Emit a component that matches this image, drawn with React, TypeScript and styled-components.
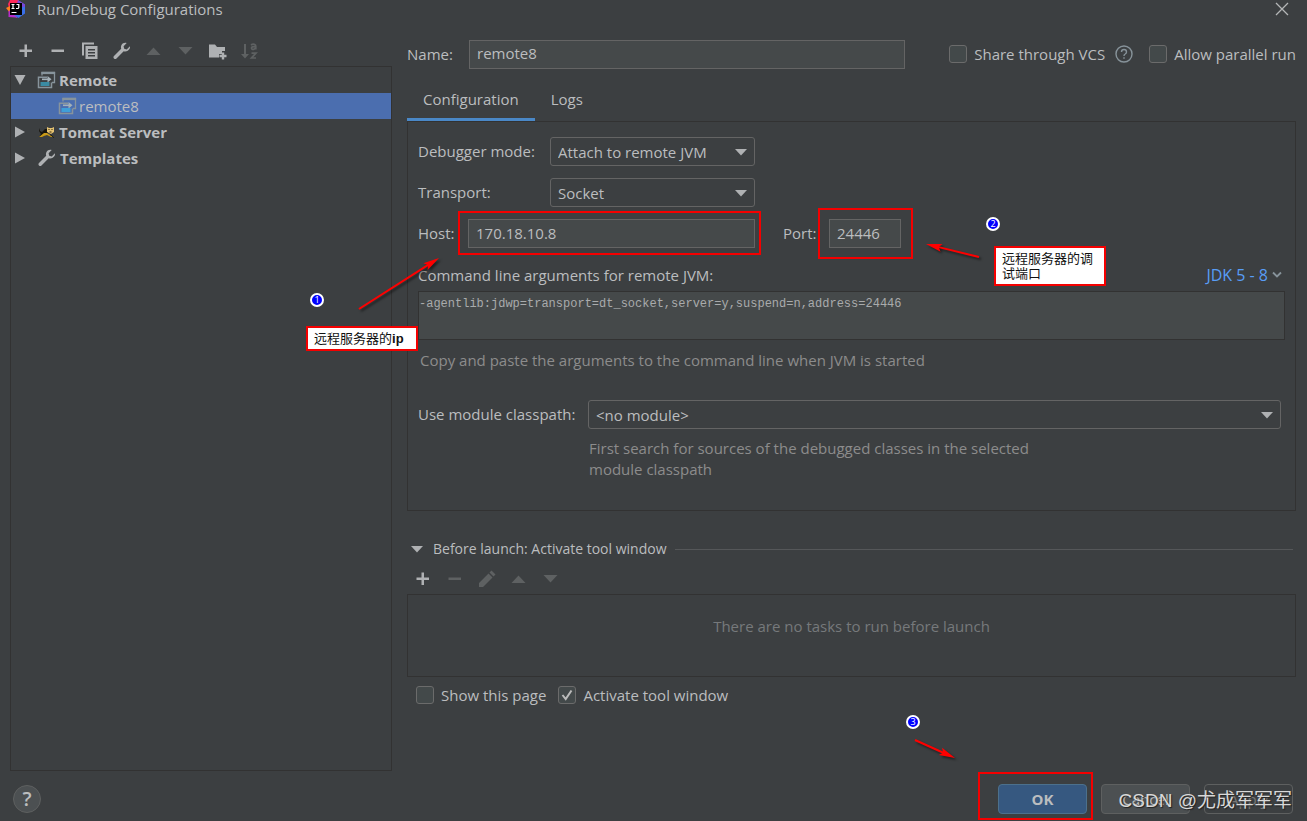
import React from "react";
import styled, { createGlobalStyle, css } from "styled-components";

const GlobalStyle = createGlobalStyle`
  *, *::before, *::after { box-sizing: border-box; }
  body {
    margin: 0;
    background: #3c3f41;
    color: #bbbdbf;
    font-family: "Open Sans", "Noto Sans", "Noto Sans CJK SC", sans-serif;
    font-size: 15px;
    line-height: 20px;
  }
  button, input, select, textarea { font: inherit; color: inherit; margin: 0; }
`;

const Dialog = styled.div`
  display: flex;
  flex-direction: column;
  min-height: 100vh;
  overflow: hidden;
`;

const TitleBar = styled.header`
  display: flex;
  align-items: center;
  height: 36px;
  padding: 0 18px 18px 6px;
`;

const Title = styled.h1`
  flex: 1;
  margin: 0 0 0 11px;
  font-size: 15px;
  font-weight: 400;
`;

const PlainButton = styled.button`
  display: flex;
  padding: 0;
  border: 0;
  background: none;
`;

const Body = styled.div`
  flex: 1;
  display: flex;
  gap: 15px;
  padding: 0 11px 0 10px;
`;

const Sidebar = styled.aside`
  flex: 0 0 382px;
  display: flex;
  flex-direction: column;
`;

const Toolbar = styled.div`
  display: flex;
  align-items: center;
  gap: 12px;
  height: 30px;
  padding: 0 6px;
`;

const TaskToolbar = styled(Toolbar)`
  margin-top: 5px;
`;

const Tree = styled.ul`
  flex: 1;
  margin: 0;
  padding: 0;
  list-style: none;
  border: 1px solid #323232;
`;

const TreeItem = styled.li<{ $child?: boolean }>`
  display: flex;
  align-items: center;
  gap: ${(p) => (p.$child ? 2 : 3)}px;
  height: 26px;
  padding-left: ${(p) => (p.$child ? 47 : 3)}px;
  font-weight: ${(p) => (p.$child ? 400 : 700)};
  background: ${(p) => (p.$child ? "#4b6eaf" : "none")};
`;

const Twisty = styled.span`
  display: flex;
  width: 20px;
`;

const Main = styled.main`
  flex: 1;
  min-width: 0;
  display: flex;
  flex-direction: column;
`;

const NameRow = styled.div`
  display: flex;
  align-items: center;
  height: 36px;
`;

const NameLabel = styled.label`
  flex: 0 0 62px;
`;

const TextInput = styled.input`
  display: block;
  width: 100%;
  min-width: 0;
  height: 29px;
  padding: 0 7px 2px;
  border: 1px solid #646464;
  border-radius: 0;
  background: #45494a;
`;

const NameField = styled.div`
  flex: 1;
  margin-right: 44px;
`;

const CheckLabel = styled.label`
  display: flex;
  align-items: center;
  gap: 7px;
  white-space: nowrap;
`;

const CheckWrap = styled.span`
  position: relative;
  display: flex;
  svg { position: absolute; left: 0; top: 0; pointer-events: none; }
`;

const CheckBox = styled.input`
  appearance: none;
  width: 18px;
  height: 18px;
  border: 1px solid #6b6b6b;
  border-radius: 3px;
  background: #43494a;
`;

const HelpMark = styled(PlainButton)`
  margin: 0 16px 0 10px;
`;

const Tabs = styled.div`
  display: flex;
  height: 49px;
  padding-top: 12px;
`;

const Tab = styled.button<{ $active?: boolean }>`
  padding: 0 16px 4px;
  border: 0;
  background: none;
  border-bottom: 3px solid ${(p) => (p.$active ? "#4a88c7" : "transparent")};
`;

const Panel = styled.section`
  position: relative;
  display: flex;
  flex-direction: column;
  border: 1px solid #323232;
  padding: 15px 10px 30px;
`;

const FieldRow = styled.div`
  display: flex;
  align-items: center;
  height: 29px;
  margin-bottom: 12px;
`;

const FieldLabel = styled.label<{ $width: number }>`
  flex: 0 0 ${(p) => p.$width}px;
  padding-bottom: 2px;
  white-space: nowrap;
`;

const SelectWrap = styled.span<{ $width?: number }>`
  position: relative;
  display: flex;
  ${(p) => (p.$width ? css`width: ${p.$width}px;` : css`flex: 1;`)}
  svg { position: absolute; right: 8px; top: 12px; pointer-events: none; }
`;

const Select = styled.select`
  appearance: none;
  width: 100%;
  height: 29px;
  padding: 0 24px 0 7px;
  border: 1px solid #646464;
  border-radius: 3px;
  background: #3c3f41;
`;

const Marked = styled.div<{ $width: number }>`
  position: relative;
  width: ${(p) => p.$width}px;
`;

const RedFrame = styled.span<{ $t: number; $b: number; $l: number; $r: number }>`
  position: absolute;
  top: -${(p) => p.$t}px;
  bottom: -${(p) => p.$b}px;
  left: -${(p) => p.$l}px;
  right: -${(p) => p.$r}px;
  border: 2px solid #f40000;
  pointer-events: none;
`;

const PortLabel = styled.label`
  width: 46px;
  margin-left: 28px;
  padding-bottom: 2px;
`;

const ArgsHead = styled.div`
  display: flex;
  justify-content: space-between;
  padding: 5px 3px 6px 0;
`;

const JdkLink = styled.a`
  display: flex;
  align-items: center;
  gap: 4px;
  color: #589df6;
  font-size: 16px;
  text-decoration: none;
`;

const Args = styled.textarea`
  height: 49px;
  padding: 2px 0;
  border: 1px solid #323232;
  border-radius: 0;
  background: #45494a;
  font-family: "Liberation Mono", monospace;
  font-size: 12px;
  resize: none;
  color: #a9abac;
`;

const Hint = styled.p<{ $left: number }>`
  width: 460px;
  margin: 0 0 0 ${(p) => p.$left}px;
  color: #8c8c8c;
  line-height: 21px;
`;

const ArgsHint = styled(Hint)`
  width: auto;
  padding: 10px 0 29px;
`;

const ModuleRow = styled(FieldRow)`
  margin: 0 4px 9px 0;
`;

const SectionHead = styled.button`
  display: flex;
  align-items: center;
  gap: 10px;
  margin-top: 28px;
  padding: 0 3px 0 4px;
  border: 0;
  background: none;
  height: 20px;
  font-size: 14px;
  &::after { content: ""; flex: 1; height: 1px; background: #555759; margin-left: -2px; }
`;

const Tasks = styled.div`
  display: flex;
  justify-content: center;
  height: 83px;
  margin-bottom: 8px;
  padding-top: 21px;
  border: 1px solid #323232;
  color: #76797b;
`;

const CheckRow = styled.div`
  display: flex;
  gap: 12px;
  padding-left: 9px;
`;

const Footer = styled.footer`
  display: flex;
  align-items: center;
  gap: 14px;
  height: 50px;
  padding: 6px 14px 0 13px;
`;

const HelpButton = styled.button`
  width: 28px;
  height: 28px;
  margin-right: auto;
  padding: 0;
  border: 1px solid #5e6060;
  border-radius: 50%;
  background: #4c5052;
  font-size: 20px;
  font-weight: 600;
`;

const Button = styled.button<{ $kind?: "primary" | "disabled" }>`
  width: 89px;
  height: 30px;
  padding: 0;
  border: 1px solid #5e6060;
  border-radius: 4px;
  background: #4c5052;
  ${(p) => p.$kind === "primary" && css`
    border-color: #4c708c;
    background: #365880;
    font-weight: 700;
  `}
  ${(p) => p.$kind === "disabled" && css`
    background: #3c3f41;
    color: #777777;
  `}
`;

const FooterActions = styled.div`
  position: relative;
  display: flex;
  gap: 14px;
`;

const Watermark = styled.span`
  position: absolute;
  right: 1px;
  top: 4px;
  font-family: "Liberation Sans", "Noto Sans CJK SC", sans-serif;
  font-size: 19px;
  line-height: 26px;
  white-space: nowrap;
  color: #d8d8d8;
  text-shadow: 1px 1px 1px #222222;
  pointer-events: none;
`;

const Note = styled.div<{ $x: number; $y: number }>`
  position: absolute;
  left: ${(p) => p.$x}px;
  top: ${(p) => p.$y}px;
  width: 112px;
  padding: 3px 6px;
  border: 2px solid #f40000;
  background: #ffffff;
  color: #111111;
  font-family: "Liberation Sans", "Noto Sans CJK SC", sans-serif;
  font-size: 13px;
  line-height: 15px;
`;

const Badge = styled.span<{ $x: number; $y: number }>`
  position: absolute;
  left: ${(p) => p.$x}px;
  top: ${(p) => p.$y}px;
  width: 14px;
  height: 14px;
  border: 2px solid #ffffff;
  border-radius: 50%;
  background: #0000ff;
  color: #ffffff;
  font-size: 9px;
  line-height: 10px;
  text-align: center;
`;

const ArrowSvg = styled.svg<{ $x: number; $y: number }>`
  position: absolute;
  left: ${(p) => p.$x}px;
  top: ${(p) => p.$y}px;
  filter: drop-shadow(2px 2px 1px rgba(0, 0, 0, 0.5));
  pointer-events: none;
`;

const BottomArea = styled.div`
  position: relative;
`;

const Arrow = ({ x, y, dx, dy }: { x: number; y: number; dx: number; dy: number }) => {
  const w = Math.abs(dx) + 12;
  const h = Math.abs(dy) + 12;
  const x1 = dx > 0 ? 6 : w - 6;
  const y1 = dy > 0 ? 6 : h - 6;
  const angle = (Math.atan2(dy, dx) * 180) / Math.PI;
  const len = Math.hypot(dx, dy);
  return (
    <ArrowSvg $x={x} $y={y} width={w} height={h} aria-hidden="true">
      <g transform={`translate(${x1} ${y1}) rotate(${angle})`} fill="#ff0000">
        <path d={`M0 0H${len - 11}`} stroke="#ff0000" strokeWidth="2" />
        <path d={`M${len} 0L${len - 16} -4L${len - 13} 0L${len - 16} 4Z`} />
      </g>
    </ArrowSvg>
  );
};

const LIT = "#afb1b3";
const DIM = "#5e6162";

const Icon = ({ children, color = LIT }: { children: React.ReactNode; color?: string }) => (
  <svg width="20" height="20" viewBox="0 0 20 20" fill={color} aria-hidden="true">{children}</svg>
);

const Tool = ({ label, children, off }: { label: string; children: React.ReactNode; off?: boolean }) => (
  <PlainButton type="button" aria-label={label} disabled={off}>
    <Icon color={off ? DIM : LIT}>{children}</Icon>
  </PlainButton>
);

const plus = <path d="M8.500 3.500h2.500v5h5v2.500h-5v5H8.500v-5h-5V8.500h5z" />;
const minus = <path d="M3.500 8.500h12.500V11H3.500z" />;
const up = <path d="M9.500 6.500L16.500 14h-14z" />;
const down = <path d="M2.500 6h14L9.500 13.500z" />;
const wrench = (
  <path d="M17.900 5.200l-3.200 3.200-2.500-.6-.6-2.500 3.100-3.200c-2-.7-4.200.1-5.200 1.900-.7 1.300-.7 2.600-.3 3.700L2 14.900c-.7.7-.7 1.800 0 2.500s1.800.7 2.500 0l7.200-7.200c1.300.5 2.800.3 4-.5 1.800-1.100 2.700-2.900 2.200-4.500z" />
);

const RemoteIcon = ({ selected }: { selected?: boolean }) => (
  <svg width="19" height="18" viewBox="0 0 19 18" aria-hidden="true">
    <path d="M5 4.500V1.500h12.500v10H15" fill="none" stroke="#87949c" strokeWidth="1.300" />
    <path d="M4.400 2h13.700" stroke="#87949c" strokeWidth="2.200" />
    <path d="M10 6.200H1.500v10.300h13V11.500" fill="none" stroke="#87949c" strokeWidth="1.500" />
    <path d="M5 8.300h7" fill="none" stroke="#a4b1b8" strokeWidth="1.600" />
    <path d="M10.500 5L14.500 8.300L10.500 11.500z" fill="#a4b1b8" />
    <path d="M3.500 11h9v4h-9z" fill={selected ? "#3f9fd8" : "#3a8ba3"} />
  </svg>
);

const TomcatIcon = () => (
  <svg width="19" height="18" viewBox="0 0 19 18" aria-hidden="true">
    <path d="M2 5l1 3 2 1 3-3 3 0 0 4-4 3-5 1 2-3-2-3z" fill="#17150e" />
    <path d="M2 14l5-4 3 0 3 2 4 2-3 0-4-2-3 1-2 1z" fill="#c99a17" />
    <path d="M10 4l2 1h3l2-1v5l-3 2-4-2z" fill="#e4c272" />
    <path d="M11.500 6.500h1M14.500 6.500h1M12.500 9h2" stroke="#3b2b08" strokeWidth="1.100" />
    <path d="M13 11.500l4 3" stroke="#17150e" strokeWidth="1" />
  </svg>
);

const Logo = () => (
  <svg width="20" height="20" viewBox="0 0 20 20" aria-hidden="true">
    <path d="M2 5L4.500 0h7L15 4l-4 8-7 2z" fill="#fe2857" />
    <path d="M0 9l4-2 3 4-3 3z" fill="#fc801d" />
    <path d="M2.500 12l5-2 4 9-2-.5-7-.5z" fill="#b72cc9" />
    <path d="M13 2l6 3.500v9L12.500 19l-4-2.500L14 9z" fill="#3a6fe8" />
    <path d="M12 1l7 4.500v2l-4 1-4-4z" fill="#7b45d6" />
    <rect x="4" y="4" width="12" height="12" fill="#000" />
    <path d="M5.500 5.500h3M7 5.500v4M5.500 9.500h3M10.500 5.500h2.300v3q0 1-1.300 1H10M5.500 13.500h5" fill="none" stroke="#fff" strokeWidth="1.200" />
  </svg>
);

const Caret = () => (
  <svg width="12" height="7" viewBox="0 0 12 7" aria-hidden="true"><path d="M0 0h12L6 6.500z" fill={LIT} /></svg>
);

const DownTwisty = () => (
  <svg width="12" height="12" viewBox="0 0 12 12" aria-hidden="true"><path d="M0.500 1h11L6 11z" fill={LIT} /></svg>
);

const RightTwisty = () => (
  <svg width="12" height="12" viewBox="0 0 12 12" aria-hidden="true"><path d="M1 0.500L11 6L1 11.500z" fill={LIT} /></svg>
);

const Check = ({ id, label, checked }: { id: string; label: string; checked?: boolean }) => (
  <CheckLabel htmlFor={id}>
    <CheckWrap>
      <CheckBox id={id} type="checkbox" defaultChecked={checked} />
      {checked && (
        <svg width="18" height="18" viewBox="0 0 18 18" aria-hidden="true">
          <path d="M4.500 9l3.200 4L13.500 4.500" fill="none" stroke="#bbbbbb" strokeWidth="2" />
        </svg>
      )}
    </CheckWrap>
    {label}
  </CheckLabel>
);

export default function App() {
  return (
    <>
      <GlobalStyle />
      <Dialog>
        <TitleBar>
          <Logo />
          <Title>Run/Debug Configurations</Title>
          <PlainButton type="button" aria-label="Close">
            <svg width="14" height="14" viewBox="0 0 14 14" aria-hidden="true">
              <path d="M1 1l12 12M13 1L1 13" stroke="#b4b6b7" strokeWidth="1.300" />
            </svg>
          </PlainButton>
        </TitleBar>
        <Body>
          <Sidebar>
            <Toolbar>
              <Tool label="Add">{plus}</Tool>
              <Tool label="Remove">{minus}</Tool>
              <Tool label="Copy">
                <path d="M2 1.500h12v2H4v11H2z" />
                <path fillRule="evenodd" d="M5.500 5h12v13h-12zM8 8v1.500h7V8zM8 11v1.500h7V11zM8 14v1.500h7V14z" />
              </Tool>
              <Tool label="Edit templates">{wrench}</Tool>
              <Tool label="Move up" off>{up}</Tool>
              <Tool label="Move down" off>{down}</Tool>
              <Tool label="New folder">
                <path d="M1 3.500h6l2 2.500h8v4h-3v3h-3v3.500H1z" />
                <path d="M13.800 11.500h2.400v2.300h2.300v2.400h-2.300v2.300h-2.400v-2.300h-2.300v-2.400h2.300z" />
              </Tool>
              <Tool label="Sort" off>
                <path d="M4 3h2v10h3l-4 4.500L1 13h3z" />
                <path d="M11 4q2-1.500 3.800-.5 1 .5 1 2v3M15.500 5.800q-4-.4-4 1.300 0 1.600 2.300 1.200 1.700-.5 1.700-2M11.500 12.200h4.500l-4.500 4.800H16" fill="none" stroke={DIM} strokeWidth="1.700" />
              </Tool>
            </Toolbar>
            <Tree>
              <TreeItem>
                <Twisty><DownTwisty /></Twisty>
                <RemoteIcon />Remote
              </TreeItem>
              <TreeItem $child><RemoteIcon selected />remote8</TreeItem>
              <TreeItem>
                <Twisty><RightTwisty /></Twisty>
                <TomcatIcon />Tomcat Server
              </TreeItem>
              <TreeItem>
                <Twisty><RightTwisty /></Twisty>
                <Icon>{wrench}</Icon>Templates
              </TreeItem>
            </Tree>
          </Sidebar>
          <Main>
            <NameRow>
              <NameLabel htmlFor="name">Name:</NameLabel>
              <NameField><TextInput id="name" defaultValue="remote8" /></NameField>
              <Check id="vcs" label="Share through VCS" />
              <HelpMark type="button" aria-label="About sharing">
                <svg width="18" height="18" viewBox="0 0 18 18" fill="none" stroke="#87939a" strokeWidth="1.400" aria-hidden="true">
                  <circle cx="9" cy="9" r="8" />
                  <path d="M6.500 7q0-2.500 2.500-2.500T11.500 7q0 1.200-1.300 2Q9 9.700 9 11M9 12.300v1.500" />
                </svg>
              </HelpMark>
              <Check id="parallel" label="Allow parallel run" />
            </NameRow>
            <Tabs role="tablist">
              <Tab role="tab" aria-selected="true" $active>Configuration</Tab>
              <Tab role="tab" aria-selected="false">Logs</Tab>
            </Tabs>
            <Panel>
              <FieldRow>
                <FieldLabel htmlFor="mode" $width={132}>Debugger mode:</FieldLabel>
                <SelectWrap $width={205}>
                  <Select id="mode"><option>Attach to remote JVM</option></Select>
                  <Caret />
                </SelectWrap>
              </FieldRow>
              <FieldRow>
                <FieldLabel htmlFor="transport" $width={132}>Transport:</FieldLabel>
                <SelectWrap $width={205}>
                  <Select id="transport"><option>Socket</option></Select>
                  <Caret />
                </SelectWrap>
              </FieldRow>
              <FieldRow>
                <FieldLabel htmlFor="host" $width={50}>Host:</FieldLabel>
                <Marked $width={287}>
                  <TextInput id="host" defaultValue="170.18.10.8" />
                  <RedFrame $t={8} $b={7} $l={10} $r={6} />
                </Marked>
                <PortLabel htmlFor="port">Port:</PortLabel>
                <Marked $width={72}>
                  <TextInput id="port" defaultValue="24446" />
                  <RedFrame $t={11} $b={11} $l={11} $r={12} />
                </Marked>
              </FieldRow>
              <ArgsHead>
                <label htmlFor="args">Command line arguments for remote JVM:</label>
                <JdkLink href="#jdk">
                  JDK 5 - 8
                  <svg width="10" height="8" viewBox="0 0 10 8" aria-hidden="true">
                    <path d="M1 1.500l4 4 4-4" fill="none" stroke="#87939a" strokeWidth="1.800" />
                  </svg>
                </JdkLink>
              </ArgsHead>
              <Args id="args" readOnly defaultValue="-agentlib:jdwp=transport=dt_socket,server=y,suspend=n,address=24446" />
              <ArgsHint $left={2}>Copy and paste the arguments to the command line when JVM is started</ArgsHint>
              <ModuleRow>
                <FieldLabel htmlFor="module" $width={170}>Use module classpath:</FieldLabel>
                <SelectWrap>
                  <Select id="module"><option>&lt;no module&gt;</option></Select>
                  <Caret />
                </SelectWrap>
              </ModuleRow>
              <Hint $left={171}>First search for sources of the debugged classes in the selected module classpath</Hint>
              <Badge $x={-98} $y={171}>1</Badge>
              <Note $x={-102} $y={204}>远程服务器的<b>ip</b></Note>
              <Arrow x={-55} y={130} dx={80} dy={-51} />
              <Badge $x={578} $y={95}>2</Badge>
              <Note $x={586} $y={124}>远程服务器的调试端口</Note>
              <Arrow x={512} y={116} dx={-53} dy={-13} />
            </Panel>
            <SectionHead type="button"><Caret />Before launch: Activate tool window</SectionHead>
            <TaskToolbar>
              <Tool label="Add task">{plus}</Tool>
              <Tool label="Remove task" off>{minus}</Tool>
              <Tool label="Edit task" off>
                <path d="M2 14L11.500 4.500l4 4L6 18H2zM12.500 3.500l2-2 4 4-2 2z" />
              </Tool>
              <Tool label="Move task up" off>{up}</Tool>
              <Tool label="Move task down" off>{down}</Tool>
            </TaskToolbar>
            <Tasks>There are no tasks to run before launch</Tasks>
            <BottomArea>
              <CheckRow>
                <Check id="show" label="Show this page" />
                <Check id="activate" label="Activate tool window" checked />
              </CheckRow>
              <Badge $x={499} $y={30}>3</Badge>
              <Arrow x={502} y={49} dx={40} dy={18} />
            </BottomArea>
          </Main>
        </Body>
        <Footer>
          <HelpButton type="button" aria-label="Help">?</HelpButton>
          <FooterActions>
            <Marked $width={89}>
              <Button type="button" $kind="primary">OK</Button>
              <RedFrame $t={12} $b={6} $l={20} $r={6} />
            </Marked>
            <Button type="button">Cancel</Button>
            <Button type="button" $kind="disabled">Apply</Button>
            <Watermark>CSDN @尤成军军军</Watermark>
          </FooterActions>
        </Footer>
      </Dialog>
    </>
  );
}
